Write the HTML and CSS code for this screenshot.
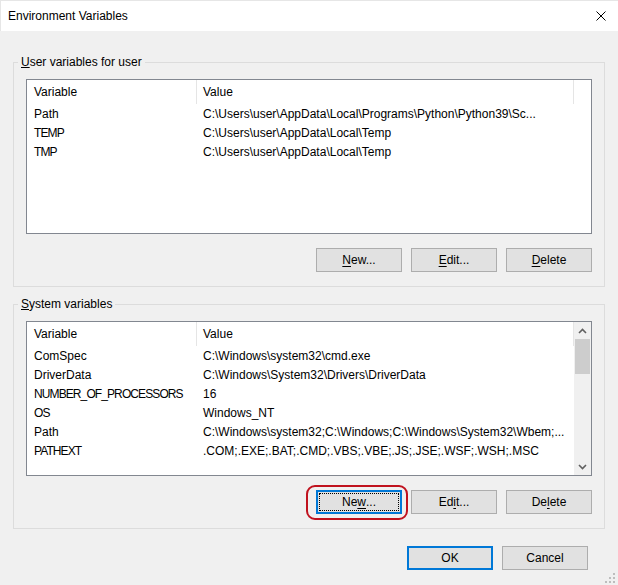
FILE: index.html
```html
<!DOCTYPE html>
<html>
<head>
<meta charset="utf-8">
<title>Environment Variables</title>
<link rel="stylesheet" href="styles.css">
</head>
<body>
<div class="window">
  <div class="titlebar">
    <span class="title">Environment Variables</span>
    <svg class="close" width="10" height="10" viewBox="0 0 10 10"><path d="M0.5 0.5 L9.5 9.5 M9.5 0.5 L0.5 9.5" stroke="#000" stroke-width="1" fill="none"/></svg>
  </div>
  <div class="main">
    <fieldset class="group">
      <legend><u>U</u>ser variables for user</legend>
      <div class="listview">
        <div class="lv-main">
          <div class="lv-header">
            <div class="hcol hc1">Variable</div>
            <div class="hcol hc2">Value</div>
          </div>
          <div class="row"><div class="rc1">Path</div><div class="rc2">C:\Users\user\AppData\Local\Programs\Python\Python39\Sc...</div></div>
          <div class="row"><div class="rc1 caps">TEMP</div><div class="rc2">C:\Users\user\AppData\Local\Temp</div></div>
          <div class="row"><div class="rc1 caps">TMP</div><div class="rc2">C:\Users\user\AppData\Local\Temp</div></div>
        </div>
      </div>
      <div class="btnrow">
        <button class="btn"><u>N</u>ew...</button>
        <button class="btn"><u>E</u>dit...</button>
        <button class="btn"><u>D</u>elete</button>
      </div>
    </fieldset>

    <fieldset class="group group2">
      <legend><u>S</u>ystem variables</legend>
      <div class="listview">
        <div class="lv-main">
          <div class="lv-header">
            <div class="hcol hc1">Variable</div>
            <div class="hcol hc2">Value</div>
          </div>
          <div class="row"><div class="rc1">ComSpec</div><div class="rc2">C:\Windows\system32\cmd.exe</div></div>
          <div class="row"><div class="rc1">DriverData</div><div class="rc2">C:\Windows\System32\Drivers\DriverData</div></div>
          <div class="row"><div class="rc1 caps">NUMBER_OF_PROCESSORS</div><div class="rc2">16</div></div>
          <div class="row"><div class="rc1 caps">OS</div><div class="rc2">Windows_NT</div></div>
          <div class="row"><div class="rc1">Path</div><div class="rc2">C:\Windows\system32;C:\Windows;C:\Windows\System32\Wbem;...</div></div>
          <div class="row"><div class="rc1 caps">PATHEXT</div><div class="rc2">.COM;.EXE;.BAT;.CMD;.VBS;.VBE;.JS;.JSE;.WSF;.WSH;.MSC</div></div>
        </div>
        <div class="scrollbar">
          <div class="sb-btn"><svg width="9" height="6" viewBox="0 0 9 6"><path d="M1 5 L4.5 1.5 L8 5" stroke="#606060" stroke-width="1.6" fill="none"/></svg></div>
          <div class="sb-track"><div class="sb-thumb"></div></div>
          <div class="sb-btn"><svg width="9" height="6" viewBox="0 0 9 6"><path d="M1 1 L4.5 4.5 L8 1" stroke="#606060" stroke-width="1.6" fill="none"/></svg></div>
        </div>
      </div>
      <div class="btnrow">
        <div class="focus-wrap"><button class="btn focused">Ne<u>w</u>...</button></div>
        <button class="btn">Ed<u>i</u>t...</button>
        <button class="btn">De<u>l</u>ete</button>
      </div>
    </fieldset>

    <div class="dlg-buttons">
      <button class="btn default">OK</button>
      <button class="btn">Cancel</button>
    </div>
  </div>
  <svg class="grip" width="10" height="10" viewBox="0 0 10 10">
    <rect x="8" y="0" width="2" height="2" fill="#bdbdbd"/>
    <rect x="4" y="4" width="2" height="2" fill="#bdbdbd"/>
    <rect x="8" y="4" width="2" height="2" fill="#bdbdbd"/>
    <rect x="0" y="8" width="2" height="2" fill="#bdbdbd"/>
    <rect x="4" y="8" width="2" height="2" fill="#bdbdbd"/>
    <rect x="8" y="8" width="2" height="2" fill="#bdbdbd"/>
  </svg>
</div>
</body>
</html>
```

FILE: styles.css
```css
* { box-sizing: border-box; }

body {
  margin: 0;
  font-family: "Liberation Sans", Arial, sans-serif;
  font-size: 12px;
  color: #000;
  background: #f0f0f0;
}

.window {
  position: relative;
  width: 618px;
  height: 585px;
  background: #f0f0f0;
  overflow: hidden;
}

.titlebar {
  height: 31px;
  background: #fff;
  border-top: 1px solid #e6e6e6;
  border-left: 1px solid #e6e6e6;
  display: flex;
  align-items: center;
  justify-content: space-between;
  padding: 0 12px 0 7px;
}

.title {
  line-height: 16px;
}

.close {
  display: block;
}

.main {
  padding: 0 13px;
}

.group {
  margin: 23px 0 0;
  padding: 9px 12px 14px;
  border: 1px solid #dcdcdc;
  min-width: 0;
}

.group2 {
  margin-top: 9px;
}

.group legend {
  padding: 0 3px;
  margin-left: -8px;
  line-height: 16px;
  font-size: 12px;
}

.listview {
  height: 155px;
  background: #fff;
  border: 1px solid #828790;
  display: flex;
}

.lv-main {
  flex: 1;
  min-width: 0;
}

.lv-header {
  display: flex;
  height: 24px;
}

.hcol {
  display: flex;
  align-items: center;
  border-right: 1px solid #e5e5e5;
  white-space: nowrap;
}

.hc1 {
  width: 170px;
  padding-left: 7px;
}

.hc2 {
  width: 377px;
  padding-left: 6px;
}

.row {
  display: flex;
  height: 19px;
  align-items: center;
  white-space: nowrap;
}

.rc1 {
  width: 170px;
  flex: none;
  padding-left: 7px;
}

.rc1.caps {
  letter-spacing: -0.9px;
}

.rc2 {
  flex: 1;
  min-width: 0;
  padding-left: 6px;
  overflow: hidden;
}

.scrollbar {
  width: 17px;
  flex: none;
  background: #f0f0f0;
  display: flex;
  flex-direction: column;
}

.sb-btn {
  height: 17px;
  display: flex;
  align-items: center;
  justify-content: center;
}

.sb-btn svg {
  display: block;
}

.sb-track {
  flex: 1;
  padding: 0 1px;
}

.sb-thumb {
  height: 35px;
  background: #cdcdcd;
}

.btnrow {
  display: flex;
  justify-content: flex-end;
  gap: 9px;
  margin-top: 14px;
}

.btn {
  width: 86px;
  height: 24px;
  padding: 0;
  margin: 0;
  background: #e1e1e1;
  border: 1px solid #adadad;
  font: inherit;
  color: #000;
  display: flex;
  align-items: center;
  justify-content: center;
  line-height: 14px;
}

.btn u {
  text-underline-offset: 2px;
}

.btn.focused {
  border: 2px solid #0078d7;
  outline: 1px dotted #000;
  outline-offset: -4px;
}

.btn.default {
  border: 2px solid #0078d7;
}

.focus-wrap {
  position: relative;
  display: flex;
}

.focus-wrap::after {
  content: "";
  position: absolute;
  left: -10px;
  top: -5px;
  right: -6px;
  bottom: -6px;
  border: 2px solid #c0121e;
  border-radius: 9px;
  pointer-events: none;
}

.dlg-buttons {
  display: flex;
  justify-content: flex-end;
  gap: 9px;
  margin-top: 17px;
  padding-right: 17px;
}

.grip {
  position: absolute;
  right: 3px;
  bottom: 2px;
  display: block;
}
```
